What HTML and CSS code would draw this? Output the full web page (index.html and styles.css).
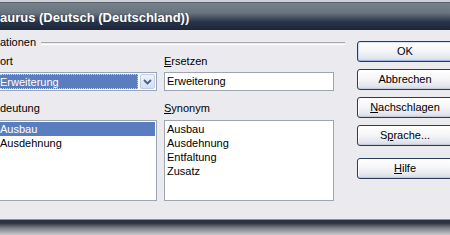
FILE: index.html
```html
<!DOCTYPE html>
<html lang="de">
<head>
<meta charset="utf-8">
<title>Thesaurus</title>
<link rel="stylesheet" href="styles.css">
</head>
<body>
<div class="win">
  <div class="topstrip"></div>
  <div class="titlebar"><span class="title">aurus (Deutsch (Deutschland))</span></div>
  <div class="client">
    <div class="main">
      <div class="group"><span class="gtitle">ationen</span><span class="gline"></span></div>
      <div class="grid">
        <div class="col left">
          <div class="label">ort</div>
          <div class="combo">
            <div class="combo-text"><span class="ctext">Erweiterung</span></div>
            <div class="combo-btn">
              <svg width="9" height="6" viewBox="0 0 9 6"><path d="M1 1 L4.5 4.5 L8 1" fill="none" stroke="#4a5f86" stroke-width="1.8"/></svg>
            </div>
          </div>
          <div class="label l2">deutung</div>
          <div class="list list-left">
            <div class="item sel">Ausbau</div>
            <div class="item">Ausdehnung</div>
          </div>
        </div>
        <div class="col right">
          <div class="label"><u>E</u>rsetzen</div>
          <div class="input">Erweiterung</div>
          <div class="label l2"><u>S</u>ynonym</div>
          <div class="list list-right">
            <div class="item">Ausbau</div>
            <div class="item">Ausdehnung</div>
            <div class="item">Entfaltung</div>
            <div class="item">Zusatz</div>
          </div>
        </div>
      </div>
    </div>
    <div class="buttons">
      <div class="btn def">OK</div>
      <div class="btn">Abbrechen</div>
      <div class="btn"><u>N</u>achschlagen</div>
      <div class="btn">S<u>p</u>rache...</div>
      <div class="btn help"><u>H</u>ilfe</div>
    </div>
  </div>
  <div class="shadow"></div>
</div>
</body>
</html>
```
FILE: styles.css
```css
html, body {
  margin: 0;
  padding: 0;
  overflow: hidden;
  background: #d0d0d2;
}
.win {
  width: 450px;
  height: 235px;
  overflow: hidden;
  display: flex;
  flex-direction: column;
  font-family: "Liberation Sans", Arial, sans-serif;
  font-size: 11px;
  color: #000;
}
.topstrip {
  height: 2px;
  background: #cfd0d3;
  flex: none;
}
.titlebar {
  height: 28px;
  flex: none;
  box-sizing: border-box;
  padding-top: 4px;
  line-height: 24px;
  background: linear-gradient(to bottom, #3a4250 0, #78828d 1px, #6a747f 11px, #4a5566 15px, #28334a 20px, #1d2638 28px);
  color: #fff;
  font-weight: bold;
  font-size: 13px;
  white-space: nowrap;
}
.title {
  text-shadow: 0 0 1px rgba(0,0,0,0.4);
}
.client {
  height: 189px;
  flex: none;
  background: #ebeaee;
  display: flex;
}
.main {
  width: 357px;
  flex: none;
  padding-top: 6px;
  box-sizing: border-box;
}
.group {
  display: flex;
  align-items: center;
  height: 13px;
  line-height: 13px;
  margin-right: 12px;
}
.gtitle {
  white-space: nowrap;
}
.gline {
  flex: 1;
  height: 1px;
  margin-left: 5px;
  margin-top: 1px;
  border-top: 1px solid #a7a7ad;
  border-bottom: 1px solid #fff;
}
.grid {
  display: grid;
  grid-template-columns: 157px 170px;
  column-gap: 7px;
  margin-top: 6px;
}
.col {
  display: flex;
  flex-direction: column;
}
.label {
  height: 13px;
  line-height: 13px;
  white-space: nowrap;
}
.label.l2 {
  margin-top: 11px;
}
.combo {
  margin-top: 4px;
  height: 19px;
  box-sizing: border-box;
  border: 1px solid #9aa6b8;
  border-left: none;
  background: #fff;
  padding: 1px 1px 1px 0;
  display: flex;
  gap: 2px;
}
.combo-text {
  flex: 1;
  background: #5a7dc0;
  color: #fff;
  line-height: 15px;
  overflow: hidden;
  white-space: nowrap;
  box-sizing: border-box;
  border: 1px dotted #c9d5ee;
  border-left: none;
}
.ctext {
  display: inline-block;
}
.combo-btn {
  width: 15px;
  flex: none;
  box-sizing: border-box;
  border: 1px solid #c1cde2;
  border-radius: 2px;
  background: linear-gradient(to bottom, #eef3fc, #d3def2);
  display: flex;
  align-items: center;
  justify-content: center;
}
.input {
  margin-top: 4px;
  height: 19px;
  box-sizing: border-box;
  border: 1px solid #9ea6b2;
  background: #fff;
  line-height: 17px;
  padding-left: 2px;
  white-space: nowrap;
}
.list {
  margin-top: 5px;
  height: 81px;
  box-sizing: border-box;
  border: 1px solid #9ea6b2;
  background: #fff;
  padding: 1px;
}
.list-left {
  border-left: none;
  padding-left: 0;
}
.item {
  height: 14px;
  line-height: 14px;
  white-space: nowrap;
}
.list-right .item {
  padding-left: 1px;
}
.item.sel {
  background: #5a7dc0;
  color: #fff;
}
.buttons {
  width: 96px;
  flex: none;
  padding-top: 11px;
  display: flex;
  flex-direction: column;
  gap: 7px;
}
.btn {
  height: 21px;
  box-sizing: border-box;
  border: 1px solid #283c5c;
  border-radius: 3px;
  background: linear-gradient(to bottom, #ffffff 0, #f6f6f9 45%, #e6e8ef 80%, #d2d7e2 100%);
  box-shadow: inset 0 -1px 0 #c3cad8, inset 1px 0 0 #fff;
  display: flex;
  align-items: center;
  justify-content: center;
  white-space: nowrap;
  line-height: 13px;
}
.btn.def {
  box-shadow: inset 0 -1px 0 #9fb4dc, inset 0 1px 0 #d8e3f6, inset 1px 0 0 #c8d6f0;
}
.btn.help {
  margin-top: 5px;
}
.shadow {
  flex: 1;
  background: linear-gradient(to bottom, #8e929a 0, #8e929a 1px, #2b3241 1px, #2b3241 4px, #3c424e 5px, #7b7f87 9px, #c7c8cb 16px);
}
```
